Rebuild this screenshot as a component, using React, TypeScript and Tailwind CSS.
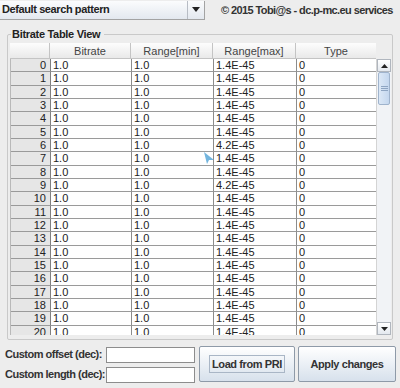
const rows = [
  "1.4E-45", "1.4E-45", "1.4E-45", "1.4E-45", "1.4E-45", "1.4E-45", "4.2E-45",
  "1.4E-45", "1.4E-45", "4.2E-45", "1.4E-45", "1.4E-45", "1.4E-45", "1.4E-45",
  "1.4E-45", "1.4E-45", "1.4E-45", "1.4E-45", "1.4E-45", "1.4E-45", "1.4E-45",
];

const cols = "grid grid-cols-[40px_81px_82px_83px_80px]";

const App = () => {
  return (
    <div className="w-[400px] h-[388px] bg-[#ededed] text-[#222] font-['Liberation_Sans',Arial,sans-serif] text-[11px] relative overflow-hidden whitespace-nowrap">
      {/* top bar */}
      <div className="flex items-center h-[20px]">
        <div className="flex w-[205px] h-[19px] border-b border-r border-[#a3a3a3] bg-gradient-to-b from-[#fbfcfd] to-[#e3e8ef]">
          <div className="flex-1 pl-[2px] flex items-center font-bold tracking-[-0.4px]">
            Default search pattern
          </div>
          <div className="w-[17px] border-l border-[#b7bcc4] flex items-center justify-center">
            <svg width="8" height="5" viewBox="0 0 8 5">
              <path d="M0 0H8L4 5Z" fill="#222" />
            </svg>
          </div>
        </div>
        <div className="ml-[16px] font-bold text-[#333] tracking-[-0.6px]">
          © 2015 Tobi@s - dc.p-mc.eu services
        </div>
      </div>

      {/* titled panel */}
      <div className="relative mt-[8px] mx-[7px] h-[312px]">
        <div className="absolute inset-x-0 top-[6px] bottom-0 border border-[#c9c9c9] rounded-[2px]" />
        <div className="relative ml-[4px] pl-[1px] pr-[4px] w-max bg-[#ededed] font-bold leading-[13px] tracking-[-0.3px]">
          Bitrate Table View
        </div>
        <div className="relative ml-[3px] mt-[2px] flex">
          <div className="w-[366px]">
            <div className={`${cols} h-[16px] bg-gradient-to-b from-[#fdfdfd] to-[#e9e9e9] border-b border-[#c4c4c4] text-[#444]`}>
              <div className="border-r border-[#c4c4c4]" />
              <div className="border-r border-[#c4c4c4] flex items-center justify-center">Bitrate</div>
              <div className="border-r border-[#c4c4c4] flex items-center justify-center">Range[min]</div>
              <div className="border-r border-[#c4c4c4] flex items-center justify-center">Range[max]</div>
              <div className="flex items-center justify-center">Type</div>
            </div>
            <div className="h-[276px] overflow-hidden border-l border-[#b9b9b9]">
              {rows.map((max, i) => (
                <div key={i} className={`${cols} h-[13.33px] leading-[12px]`}>
                  <div className="bg-[#e6e6e6] border-b border-[#9a9a9a] border-r border-r-[#808080] text-right pr-[4px]">{i}</div>
                  <div className="bg-white border-b border-[#9a9a9a] border-r border-r-[#8c8c8c] pl-[2px]">1.0</div>
                  <div className="bg-white border-b border-[#9a9a9a] border-r border-r-[#8c8c8c] pl-[2px]">1.0</div>
                  <div className="bg-white border-b border-[#9a9a9a] border-r border-r-[#8c8c8c] pl-[2px]">{max}</div>
                  <div className="bg-white border-b border-[#9a9a9a] pl-[2px]">0</div>
                </div>
              ))}
            </div>
          </div>
          {/* scrollbar */}
          <div className="w-[15px] mt-[16px] h-[276px] flex flex-col bg-[#f1f3f6] border-l border-[#d4d4d4]">
            <div className="h-[13px] flex items-center justify-center bg-gradient-to-b from-white to-[#e4e9ef] border border-[#b0b6be]">
              <svg width="7" height="4" viewBox="0 0 7 4">
                <path d="M0 4H7L3.5 0Z" fill="#222" />
              </svg>
            </div>
            <div className="h-[33px] mx-[1px] flex flex-col items-center justify-center gap-[1px] bg-gradient-to-r from-[#dce8f6] to-[#c4d7ee] border border-[#9fb3cc] rounded-[2px]">
              <div className="w-[7px] h-px bg-[#8ea5c2]" />
              <div className="w-[7px] h-px bg-[#8ea5c2]" />
              <div className="w-[7px] h-px bg-[#8ea5c2]" />
            </div>
            <div className="flex-1" />
            <div className="h-[13px] flex items-center justify-center bg-gradient-to-b from-white to-[#e4e9ef] border border-[#b0b6be]">
              <svg width="7" height="4" viewBox="0 0 7 4">
                <path d="M0 0H7L3.5 4Z" fill="#222" />
              </svg>
            </div>
          </div>
        </div>
      </div>

      {/* bottom controls */}
      <div className="flex mt-[6px] pl-[5px]">
        <div className="flex flex-col gap-[5px] pt-[1px]">
          <div className="flex items-center h-[15px]">
            <span className="w-[101px] font-bold text-[#333] tracking-[-0.5px]">Custom offset (dec):</span>
            <div className="w-[89px] h-[16px] bg-white border border-[#8d8d8d]" />
          </div>
          <div className="flex items-center h-[15px]">
            <span className="w-[101px] font-bold text-[#333] tracking-[-0.5px]">Custom length (dec):</span>
            <div className="w-[89px] h-[16px] bg-white border border-[#8d8d8d]" />
          </div>
        </div>
        <button className="ml-[4px] w-[96px] h-[36px] flex items-center justify-center bg-gradient-to-b from-white to-[#d7e1ec] border border-[#8e9aa8] rounded-[2px] font-bold text-[#333] tracking-[-0.4px]">
          <span className="px-[2px] border border-[#a9b6c6]">Load from PRI</span>
        </button>
        <button className="ml-[3px] w-[98px] h-[36px] flex items-center justify-center bg-gradient-to-b from-white to-[#d7e1ec] border border-[#8e9aa8] rounded-[2px] font-bold text-[#333] tracking-[-0.4px]">
          Apply changes
        </button>
      </div>

      {/* mouse cursor */}
      <svg className="absolute left-[203px] top-[151px]" width="12" height="14" viewBox="0 0 12 14">
        <path d="M1 1L11 9L6 9L4 13Z" fill="#5aa8d8" opacity="0.85" />
      </svg>
    </div>
  );
};

export default App;
